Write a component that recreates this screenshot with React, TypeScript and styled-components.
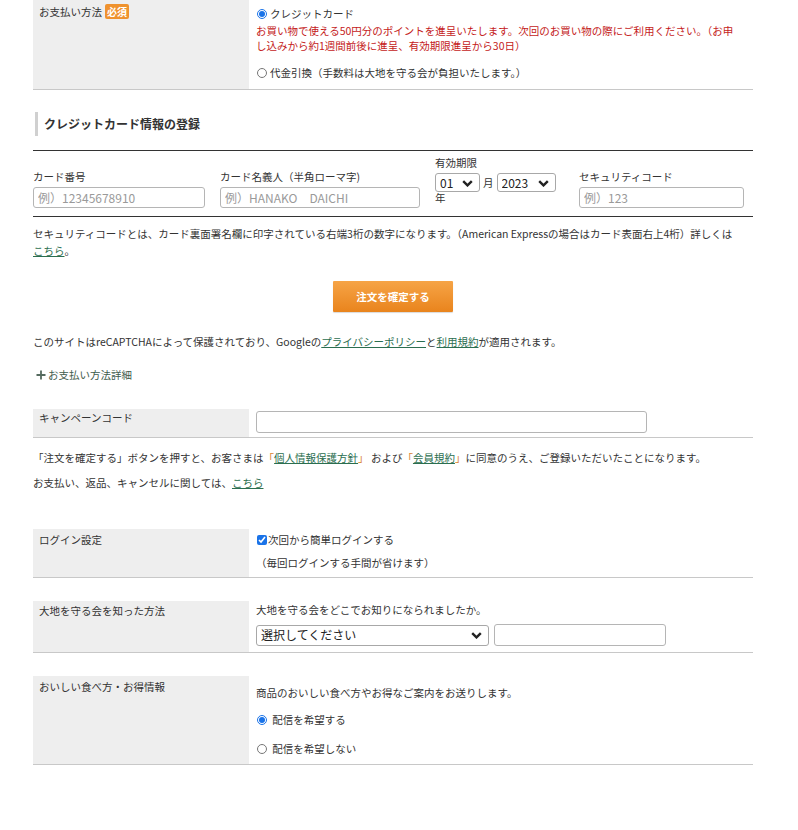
import React from 'react';
import styled, { createGlobalStyle } from 'styled-components';

const GlobalStyle = createGlobalStyle`
  html, body { margin: 0; padding: 0; background: #fff; }
  body {
    font-family: "Noto Sans CJK JP", "Noto Sans", sans-serif;
    font-size: 10.5px;
    line-height: 15px;
    color: #333;
  }
  * { box-sizing: border-box; }
`;

const Page = styled.div`
  width: 720px;
  margin-left: 33px;
  padding-bottom: 60px;
`;

const Row = styled.div<{ $mt?: number }>`
  display: grid;
  grid-template-columns: 216px 1fr;
  border-bottom: 1px solid #c8c8c8;
  margin-top: ${(p) => p.$mt ?? 0}px;
`;

const LabelCell = styled.div<{ $pt?: number }>`
  background: #eeeeee;
  padding: ${(p) => p.$pt ?? 3}px 6px 0 6px;
  display: flex;
  align-items: flex-start;
  gap: 3px;
`;

const ValueCell = styled.div<{ $pt?: number; $pb?: number }>`
  padding: ${(p) => p.$pt ?? 0}px 0 ${(p) => p.$pb ?? 0}px 7px;
  display: flex;
  flex-direction: column;
  align-items: flex-start;
`;

const Badge = styled.span`
  display: inline-block;
  background: #ef922e;
  color: #fff;
  font-weight: bold;
  font-size: 10px;
  line-height: 15px;
  padding: 0 2px;
  border-radius: 2px;
`;

const Line = styled.div<{ $mt?: number; $ml?: number; $color?: string }>`
  display: flex;
  align-items: center;
  height: 15px;
  margin-top: ${(p) => p.$mt ?? 0}px;
  margin-left: ${(p) => p.$ml ?? 0}px;
  color: ${(p) => p.$color ?? '#333'};
  white-space: nowrap;
`;

const RedNote = styled.p`
  margin: 2px 0 0;
  color: #c41a1a;
  width: 487px;
`;

const Radio = styled.input.attrs({ type: 'radio' })`
  width: 10px;
  height: 10px;
  margin: 0 3px 0 1px;
  accent-color: #1a73e8;
`;

const Check = styled.input.attrs({ type: 'checkbox' })`
  width: 10px;
  height: 10px;
  margin: 0 1px 0 1px;
  accent-color: #1a73e8;
`;

const Heading = styled.div`
  margin-top: 22px;
  padding-bottom: 14px;
  border-bottom: 1px solid #333;
`;

const HeadingText = styled.h2`
  margin: 0 0 0 2px;
  border-left: 3px solid #d0d0d0;
  padding-left: 6px;
  font-size: 12px;
  font-weight: bold;
  line-height: 24px;
  color: #333;
`;

const CardGrid = styled.div`
  display: grid;
  grid-template-columns: 172px 200px 129px 165px;
  column-gap: 15px;
  align-items: end;
  padding: 4px 0 8px;
  border-bottom: 1px solid #333;
`;

const Field = styled.div`
  display: flex;
  flex-direction: column;
`;

const FieldLabel = styled.label`
  display: block;
  margin-bottom: 3px;
`;

const TextInput = styled.input<{ $w?: number; $h?: number }>`
  width: ${(p) => (p.$w ? `${p.$w}px` : '100%')};
  height: ${(p) => p.$h ?? 21}px;
  border: 1px solid #b5b5b5;
  border-radius: 3px;
  padding: 0 4px;
  font-family: "Noto Sans CJK JP", "Noto Sans", sans-serif;
  font-size: 12px;
  color: #333;
  background: #fff;
  &::placeholder { color: #9a9a9a; }
`;

const ExpiryField = styled.div`
  display: flex;
  flex-direction: column;
  padding-bottom: 4px;
`;

const SelectRow = styled.div`
  display: flex;
  align-items: center;
  margin-top: 3px;
  gap: 3px;
`;

const YearText = styled.div`
  line-height: 12px;
`;

const SelectWrap = styled.div<{ $w: number; $h: number }>`
  position: relative;
  width: ${(p) => p.$w}px;
  height: ${(p) => p.$h}px;
`;

const NativeSelect = styled.select`
  appearance: none;
  width: 100%;
  height: 100%;
  border: 1px solid #a8a8a8;
  border-radius: 3px;
  background: #fff;
  padding: 0 0 0 4px;
  font-family: "Noto Sans CJK JP", "Noto Sans", sans-serif;
  font-size: 12px;
  color: #222;
  line-height: 1;
`;

const Chevron = styled.svg`
  position: absolute;
  right: 7px;
  top: 50%;
  width: 11px;
  height: 7px;
  margin-top: -3px;
  pointer-events: none;
`;

const Select = ({ w, h, value }: { w: number; h: number; value: string }) => (
  <SelectWrap $w={w} $h={h}>
    <NativeSelect defaultValue={value}>
      <option value={value}>{value}</option>
    </NativeSelect>
    <Chevron viewBox="0 0 11 7">
      <path d="M1.2 1.2 L5.5 5.4 L9.8 1.2" fill="none" stroke="#222" strokeWidth="2.4" strokeLinejoin="miter" />
    </Chevron>
  </SelectWrap>
);

const Note = styled.p`
  margin: 8px 0 0;
  line-height: 17px;
  white-space: nowrap;
`;

const Link = styled.a`
  color: #2b6e4f;
  text-decoration: underline;
  cursor: pointer;
`;

const Bracket = styled.span`
  color: #d9822b;
`;

const ButtonBar = styled.div`
  display: flex;
  justify-content: center;
  margin-top: 22px;
`;

const SubmitButton = styled.button`
  width: 120px;
  height: 31px;
  border: none;
  border-radius: 1px;
  background: linear-gradient(#f6a446, #e9841d);
  color: #fff;
  font-family: "Noto Sans CJK JP", "Noto Sans", sans-serif;
  font-size: 10.5px;
  font-weight: bold;
  box-shadow: 0 1px 1px rgba(0,0,0,0.15);
`;

const Para = styled.p<{ $mt: number }>`
  margin: ${(p) => p.$mt}px 0 0;
  white-space: nowrap;
`;

const Toggle = styled.div`
  margin-top: 18px;
  display: flex;
  align-items: center;
  gap: 2px;
  height: 15px;
  color: #3e5c4d;
  padding-left: 3px;
`;

const SelectLine = styled.div`
  display: flex;
  align-items: center;
  gap: 5px;
  margin-top: 7px;
`;

export default function App() {
  return (
    <>
      <GlobalStyle />
      <Page>
        <Row>
          <LabelCell $pt={4}>
            <span>お支払い方法</span>
            <Badge>必須</Badge>
          </LabelCell>
          <ValueCell $pt={6} $pb={9}>
            <Line>
              <Radio name="pay" defaultChecked />
              <span>クレジットカード</span>
            </Line>
            <RedNote>
              お買い物で使える50円分のポイントを進呈いたします。次回のお買い物の際にご利用ください。（お申し込みから約1週間前後に進呈、有効期限進呈から30日）
            </RedNote>
            <Line $mt={12}>
              <Radio name="pay" />
              <span>代金引換（手数料は大地を守る会が負担いたします。）</span>
            </Line>
          </ValueCell>
        </Row>

        <Heading>
          <HeadingText>クレジットカード情報の登録</HeadingText>
        </Heading>

        <CardGrid>
          <Field>
            <FieldLabel>カード番号</FieldLabel>
            <TextInput placeholder="例）12345678910" />
          </Field>
          <Field>
            <FieldLabel>カード名義人（半角ローマ字)</FieldLabel>
            <TextInput placeholder="例）HANAKO　DAICHI" />
          </Field>
          <ExpiryField>
            <span>有効期限</span>
            <SelectRow>
              <Select w={45} h={19} value="01" />
              <span>月</span>
              <Select w={59} h={19} value="2023" />
            </SelectRow>
            <YearText>年</YearText>
          </ExpiryField>
          <Field>
            <FieldLabel>セキュリティコード</FieldLabel>
            <TextInput placeholder="例）123" />
          </Field>
        </CardGrid>

        <Note>
          セキュリティコードとは、カード裏面署名欄に印字されている右端3桁の数字になります。（American Expressの場合はカード表面右上4桁）詳しくは
          <br />
          <Link>こちら</Link>。
        </Note>

        <ButtonBar>
          <SubmitButton>注文を確定する</SubmitButton>
        </ButtonBar>

        <Para $mt={22}>
          このサイトはreCAPTCHAによって保護されており、Googleの<Link>プライバシーポリシー</Link>と<Link>利用規約</Link>が適用されます。
        </Para>

        <Toggle>
          <svg width="10" height="10" viewBox="0 0 10 10">
            <path d="M5 0.5 V9.5 M0.5 5 H9.5" stroke="#556b5f" strokeWidth="1.8" />
          </svg>
          <span>お支払い方法詳細</span>
        </Toggle>

        <Row $mt={27}>
          <LabelCell $pt={1}>キャンペーンコード</LabelCell>
          <ValueCell $pt={2} $pb={4}>
            <TextInput $w={391} $h={22} />
          </ValueCell>
        </Row>

        <Para $mt={12}>
          「注文を確定する」ボタンを押すと、お客さまは<Bracket>「</Bracket><Link>個人情報保護方針</Link><Bracket>」</Bracket> および<Bracket>「</Bracket><Link>会員規約</Link><Bracket>」</Bracket>に同意のうえ、ご登録いただいたことになります。
        </Para>
        <Para $mt={10}>
          お支払い、返品、キャンセルに関しては、<Link>こちら</Link>
        </Para>

        <Row $mt={39}>
          <LabelCell $pt={3}>ログイン設定</LabelCell>
          <ValueCell $pt={3} $pb={7}>
            <Line>
              <Check defaultChecked />
              <span>次回から簡単ログインする</span>
            </Line>
            <Line $mt={8}>（毎回ログインする手間が省けます）</Line>
          </ValueCell>
        </Row>

        <Row $mt={23}>
          <LabelCell $pt={2}>大地を守る会を知った方法</LabelCell>
          <ValueCell $pt={1} $pb={6}>
            <Line>大地を守る会をどこでお知りになられましたか。</Line>
            <SelectLine>
              <Select w={233} h={21} value="選択してください" />
              <TextInput $w={172} $h={22} />
            </SelectLine>
          </ValueCell>
        </Row>

        <Row $mt={23}>
          <LabelCell $pt={3}>おいしい食べ方・お得情報</LabelCell>
          <ValueCell $pt={9} $pb={8}>
            <Line>商品のおいしい食べ方やお得なご案内をお送りします。</Line>
            <Line $mt={12}>
              <Radio name="mail" defaultChecked />
              <span>&nbsp;配信を希望する</span>
            </Line>
            <Line $mt={14}>
              <Radio name="mail" />
              <span>&nbsp;配信を希望しない</span>
            </Line>
          </ValueCell>
        </Row>
      </Page>
    </>
  );
}
